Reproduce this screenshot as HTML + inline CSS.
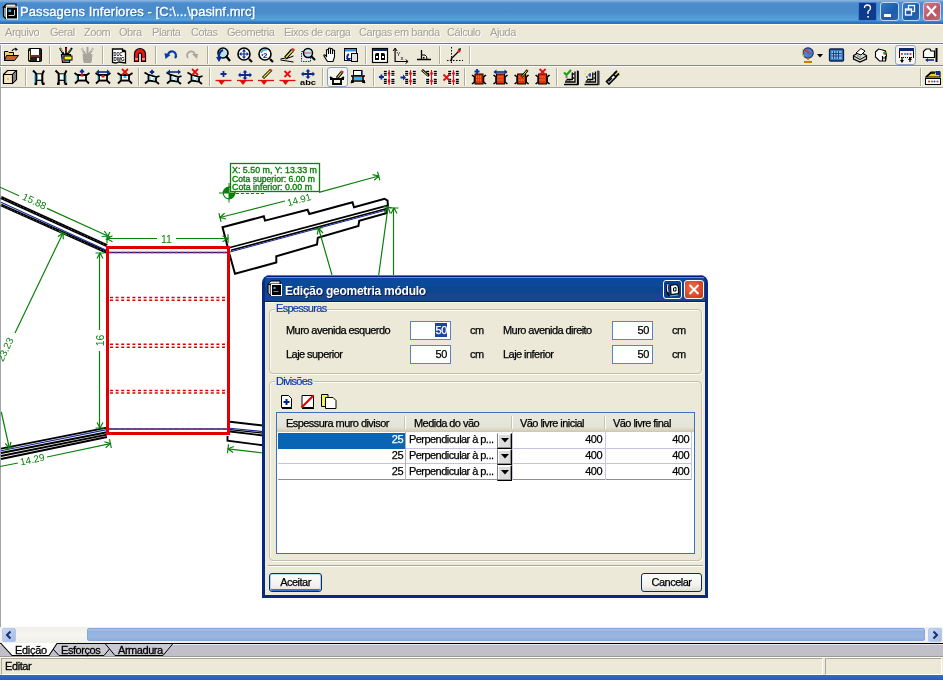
<!DOCTYPE html>
<html><head><meta charset="utf-8">
<style>
*{margin:0;padding:0;box-sizing:border-box}
html,body{width:943px;height:680px;overflow:hidden;background:#fff;font-family:"Liberation Sans",sans-serif;font-size:11px;line-height:13px}
.a{position:absolute}
body{will-change:transform}
#title{left:0;top:0;width:943px;height:24px;background:linear-gradient(#7ea6d6 0,#8db6e4 1px,#5796d4 2px,#4a8ccb 4px,#4a8bca 12px,#55a0da 19px,#5aa6dd 20px,#2f77c4 22px,#2a6fc0 24px)}
#title .t{left:20px;top:4px;color:#fff;font-size:13px;line-height:15px;letter-spacing:0.08px;-webkit-text-stroke:0.35px #fff;text-shadow:1px 1px 0 rgba(20,50,110,0.45)}
#menu{left:0;top:24px;width:943px;height:19px;background:#ece9d8;border-top:1px solid #fffbe0;border-bottom:1px solid #f8f8ff}
#menu span{position:absolute;top:1px;color:#a4a195;letter-spacing:-0.45px;text-shadow:1px 1px 0 #fff}
#tb1{left:0;top:43px;width:943px;height:23px;background:#ece9d8;border-top:1px solid #7c7a6c;border-bottom:1px solid #8c8a7a;box-shadow:inset 0 1px 0 #fff,inset 1px 0 0 #a0a4ac,inset 2px 0 0 #fff}
#tb2{left:0;top:66px;width:943px;height:22px;background:#ece9d8;border-top:1px solid #f8f8ff;border-bottom:1px solid #a4a290;box-shadow:inset 1px 0 0 #a0a4ac,inset 2px 0 0 #fff}
#draw{left:0;top:88px;width:943px;height:539px;background:#fff;border-left:1px solid #a0a4ac}
.sep{position:absolute;top:3px;width:2px;height:18px;border-left:1px solid #b0ac98;border-right:1px solid #fff}
/* dialog */
#dlg{left:262px;top:275px;width:446px;height:323px;background:#0a2a80;border-radius:8px 8px 0 0}
#dlgt{left:3px;top:0;width:440px;height:27px;border-radius:6px 6px 0 0;background:linear-gradient(#1d8fe3 0,#1d8fe3 1px,#002080 1px,#002080 2px,#20a8f0 2px,#20a8f0 3px,#0b4a98 3px,#0b4a98 12px,#0c4690 12px,#0c4690 18px,#18458f 18px,#18458f 26px,#002070 26px)}
#client{left:3px;top:27px;width:440px;height:293px;background:#ece9d8;border-top:1px solid #fffbe0}
.lbl{position:absolute;color:#000;letter-spacing:-0.55px;white-space:nowrap;-webkit-text-stroke:0.25px #000}
.grp{position:absolute;border:1px solid #c4c0aa;border-radius:4px;box-shadow:1px 1px 0 #fbfaf4,inset 1px 1px 0 #fbfaf4}
.glbl{position:absolute;color:#0b3aa8;-webkit-text-stroke:0.2px #0b3aa8;background:#ece9d8;padding:0 1px;letter-spacing:-0.7px;white-space:nowrap}
.inp{position:absolute;width:41px;height:19px;background:#fff;border:1px solid #5a82c4;text-align:right;padding:2px 3px 0 0;letter-spacing:-0.4px;-webkit-text-stroke:0.25px #000}
.btn{position:absolute;height:19px;border:1px solid #0a2a6a;border-radius:3px;background:linear-gradient(#fcfcfb,#f2f1ec 70%,#e0ddd2);text-align:center;padding-top:2px;letter-spacing:-0.5px;-webkit-text-stroke:0.25px #000}
</style></head><body>
<div id="title" class="a"><div class="t a">Passagens Inferiores - [C:\...\pasinf.mrc]</div></div>
<!--TBTN-->
<svg class="a" style="left:2px;top:3px" width="17" height="17" viewBox="0 0 17 17">
 <path d="M1.5 4 L4.5 1 L14 1 L14 4 Z" fill="#e8e8e8" stroke="#000" stroke-width="1.2"/>
 <path d="M1.5 4 L1.5 13.5 L4.5 16 L4.5 4.5 Z" fill="#aaa" stroke="#000" stroke-width="1.2"/>
 <rect x="4.5" y="4" width="11" height="12" fill="#000" stroke="#fff" stroke-width="1"/>
 <rect x="6.5" y="6.5" width="2.5" height="2.5" fill="#3ab0ff"/>
 <path d="M6.5 12.5 h6 M12.5 7 v5" stroke="#ccc" stroke-width="1"/>
</svg>
<div class="a" style="left:858px;top:2px;width:19px;height:19px;border:1px solid #3a80d8;border-radius:2px;background:#0d3a8a"></div>
<div class="a" style="left:880px;top:2px;width:19px;height:19px;border:1px solid #c0d8f8;border-radius:3px;background:linear-gradient(135deg,#3a78c8,#1d5aa8 60%,#2a66b4)"></div>
<div class="a" style="left:902px;top:2px;width:18px;height:19px;border:1px solid #c0d8f8;border-radius:3px;background:linear-gradient(135deg,#3a78c8,#1d5aa8 60%,#2a66b4)"></div>
<div class="a" style="left:923px;top:2px;width:18px;height:19px;border:1px solid #e8c8d0;border-radius:3px;background:linear-gradient(135deg,#d07888,#b85868 60%,#c06878)"></div>
<svg class="a" style="left:853px;top:0" width="90" height="24" viewBox="853 0 90 24">
 <path d="M864.5 8 Q864.5 5 867.5 5 Q870.5 5 870.5 8 Q870.5 10 868 11.5 L868 14" fill="none" stroke="#fff" stroke-width="1.3"/>
 <rect x="867.3" y="16" width="1.6" height="1.6" fill="#fff"/>
 <rect x="884" y="14" width="7" height="3" fill="#fff"/>
 <rect x="908.5" y="5.5" width="6" height="6" fill="none" stroke="#fff" stroke-width="1.3"/>
 <rect x="905.5" y="9" width="6" height="6" fill="#1d5aa8" stroke="#fff" stroke-width="1.3"/>
 <path d="M905.5 10 h6" stroke="#fff" stroke-width="1.3"/>
 <path d="M927 6 L936 16 M936 6 L927 16" stroke="#fff" stroke-width="2"/>
</svg>
<!--/TBTN-->
<div id="menu" class="a">
<span style="left:5px">Arquivo</span><span style="left:50px">Geral</span><span style="left:84px">Zoom</span><span style="left:119px">Obra</span><span style="left:152px">Planta</span><span style="left:191px">Cotas</span><span style="left:227px">Geometria</span><span style="left:284px">Eixos de carga</span><span style="left:359px">Cargas em banda</span><span style="left:447px">Cálculo</span><span style="left:490px">Ajuda</span>
</div>
<div id="tb1" class="a"></div>
<div id="tb2" class="a"></div>
<!--TB--><div class="a" style="left:895px;top:45px;width:21px;height:20px;border:1px solid #8ca4c8;border-radius:3px;background:#f6f4ec"></div><div class="a" style="left:327px;top:67px;width:21px;height:20px;border:1px solid #8ca4c8;border-radius:3px;background:#f6f4ec"></div><div class="sep" style="left:49px;top:46px"></div><div class="sep" style="left:102px;top:46px"></div><div class="sep" style="left:155px;top:46px"></div><div class="sep" style="left:207px;top:46px"></div><div class="sep" style="left:365px;top:46px"></div><div class="sep" style="left:439px;top:46px"></div><div class="sep" style="left:25px;top:68px"></div><div class="sep" style="left:138px;top:68px"></div><div class="sep" style="left:209px;top:68px"></div><div class="sep" style="left:322px;top:68px"></div><div class="sep" style="left:373px;top:68px"></div><div class="sep" style="left:464px;top:68px"></div><div class="sep" style="left:556px;top:68px"></div><div class="sep" style="left:920px;top:68px"></div><div class="sep" style="left:469px;top:46px"></div><svg class="a" style="left:817px;top:54px" width="6" height="4"><path d="M0 0 L6 0 L3 3.5 Z" fill="#000"/></svg><svg class="a" style="left:0;top:0" width="943" height="88" viewBox="0 0 943 88"><g stroke-linecap="butt"><g transform="translate(3 47)"><path d="M1.5 4.5 L5 4.5 L6 5.5 L10.5 5.5 L10.5 13.5 L1.5 13.5 Z" fill="#f0d860" stroke="#000"/><path d="M3.5 8.5 L15.5 8.5 L11.5 13.5 L1.5 13.5 Z" fill="#c8642a" stroke="#000"/><path d="M9 4 Q10.5 1 13.5 2" fill="none" stroke="#000" stroke-width="1.2"/><path d="M12 0.5 L15 2.5 L12.5 4 Z" fill="#000"/></g><g transform="translate(27 47)"><rect x="1.5" y="1.5" width="13" height="13" rx="1" fill="#202020" stroke="#000"/><rect x="4" y="2" width="8" height="6" fill="#fff"/><path d="M3 9 L13 9" stroke="#e04020" stroke-width="1"/><path d="M2.5 4 L2.5 13" stroke="#f0e020" stroke-width="1"/><rect x="10" y="11" width="2" height="3" fill="#fff"/></g><g transform="translate(58 47)"><path d="M2 1 L6 8 M14 1 L9 8 M8 0 L8 7" stroke="#000" stroke-width="2"/><path d="M2.5 1.5 L5 5" stroke="#f0f0a0" stroke-width="1"/><path d="M13 2 L10 6" stroke="#30a030" stroke-width="1"/><path d="M8 1 L8 6" stroke="#e02020" stroke-width="1"/><path d="M3.5 7.5 L12.5 7.5 L11.5 15.5 L4.5 15.5 Z" fill="#30a0e0" stroke="#000" stroke-width="1.2"/><rect x="6" y="9" width="8" height="4" fill="#f8f020" stroke="#000"/><path d="M4.5 12 L7 15" stroke="#e03030" stroke-width="1.5"/></g><g transform="translate(79.5 47)"><path d="M2 1 L6 8 M14 1 L9 8 M8 0 L8 7" stroke="#a8a69c" stroke-width="2"/><path d="M3.5 7.5 L12.5 7.5 L11.5 15.5 L4.5 15.5 Z" fill="#a8a69c" stroke="#a8a69c"/><path d="M1 0 L4 4 M15 0 L12 4" stroke="#fff" stroke-width="1" opacity="0.6"/></g><g transform="translate(111 47)"><path d="M1.5 2 L11.5 2 L11.5 4.5 L14.5 4.5 L14.5 16 L8 15 L5 16 L1.5 15.5 Z" fill="#fff" stroke="#000" stroke-width="1.3"/><path d="M11.5 3.5 Q13 3 14.5 4.5" fill="none" stroke="#000" stroke-width="1.5"/><text x="2.5" y="8.6" font-size="5" font-weight="bold" font-family="Liberation Sans" fill="#000" textLength="9" lengthAdjust="spacingAndGlyphs">DOC</text><text x="2.5" y="13.6" font-size="5" font-weight="bold" font-family="Liberation Sans" fill="#000" textLength="11" lengthAdjust="spacingAndGlyphs">DWG</text></g><g transform="translate(132 47)"><path d="M2.5 14.5 L2.5 7 A5.5 5.5 0 0 1 13.5 7 L13.5 14.5 L9.5 14.5 L9.5 7.5 A1.5 1.5 0 0 0 6.5 7.5 L6.5 14.5 Z" fill="#e01818" stroke="#000" stroke-width="1.2"/><path d="M3 12 h3 M10 12 h3" stroke="#fff" stroke-width="1.2"/></g><g transform="translate(163 47)"><path d="M12 11 A4 4 0 1 0 5 9" fill="none" stroke="#0a3aa8" stroke-width="2.2"/><path d="M1.5 6 L7.5 8 L2.5 12 Z" fill="#0a3aa8"/></g><g transform="translate(184 47)"><path d="M4 11 A4 4 0 1 1 11 9" fill="none" stroke="#a8a69c" stroke-width="1.8"/><path d="M8 7 L14 7 L13 12 Z" fill="#a8a69c"/></g><g transform="translate(215 47)"><circle cx="8" cy="6" r="5" fill="#b8e0f0" stroke="#000" stroke-width="1.6"/><path d="M11 9 L15 14" stroke="#000" stroke-width="2.2"/><path d="M8 3 Q3 5 4 12" fill="none" stroke="#0a2a90" stroke-width="2.2"/><path d="M1 10 L4 15 L7 10 Z" fill="#0a2a90"/></g><g transform="translate(237 47)"><circle cx="7" cy="7" r="6" fill="#fff" stroke="#000" stroke-width="1.6"/><path d="M12 12 L15 15" stroke="#000" stroke-width="2.2"/><path d="M7 3 L7 11 M3 7 L11 7" stroke="#0a2a90" stroke-width="1.2"/><path d="M7 2 L5 4.5 L9 4.5 Z M7 12 L5 9.5 L9 9.5 Z M2 7 L4.5 5 L4.5 9 Z M12 7 L9.5 5 L9.5 9 Z" fill="#0a2a90"/></g><g transform="translate(258 47)"><circle cx="7" cy="7" r="6" fill="#fff" stroke="#000" stroke-width="1.6"/><path d="M12 12 L15 15" stroke="#000" stroke-width="2.2"/><path d="M3 6 Q5 2 9 3" fill="none" stroke="#40b0e0" stroke-width="1.5"/><text x="5" y="10.5" font-size="8" font-family="Liberation Sans" font-weight="bold" fill="#0a2a90">2</text><path d="M3 8 l2 -1 l0 2 z" fill="#0a2a90"/></g><g transform="translate(279.5 47)"><path d="M6 11 L13 3" stroke="#000" stroke-width="3.5"/><path d="M6.5 10.5 L13 3.5" stroke="#f0e040" stroke-width="1.5"/><path d="M12.5 1.5 L15 3.5" stroke="#e03020" stroke-width="2"/><path d="M1 12 L6 11 M1 13 L14 15 M6 12 L14 9" stroke="#000" stroke-width="1"/></g><g transform="translate(300 47)"><rect x="1.5" y="4.5" width="9" height="10" fill="none" stroke="#1030a0" stroke-dasharray="1.5 1"/><circle cx="8" cy="6" r="4.5" fill="#c0e8f0" stroke="#000" stroke-width="1.5"/><path d="M4 6 h7" stroke="#e04060" stroke-width="1"/><path d="M11 9 L15 13" stroke="#000" stroke-width="2.2"/></g><g transform="translate(322 47)"><path d="M5.5 14.5 L2 9 Q1.5 7.5 3 8 L4.5 9.5 L4.5 3 Q5.5 2 6.5 3 L6.5 7 L6.5 1.5 Q7.5 0.5 8.5 1.5 L8.5 7 L8.5 2 Q9.5 1 10.5 2 L10.5 7 L10.5 3.5 Q11.5 2.5 12.5 3.5 L12.5 10 L11 14.5 Z" fill="#fff" stroke="#000" stroke-width="1.1"/></g><g transform="translate(343 47)"><rect x="1.5" y="1.5" width="12" height="12" fill="#fff" stroke="#000"/><rect x="2" y="2" width="11" height="2.5" fill="#3a8ad0"/><rect x="8.5" y="6.5" width="6" height="8" fill="#e0e0e0" stroke="#000"/><path d="M6 7 Q3 9 5 13" fill="none" stroke="#0a2a90" stroke-width="1.8"/><path d="M3 11 L6 14.5 L8 11 Z" fill="#0a2a90"/></g><g transform="translate(372 47)"><rect x="0.5" y="1.5" width="15" height="14" fill="#fff" stroke="#000" stroke-width="1.2"/><rect x="1" y="2" width="14" height="2" fill="#0a2a70"/><path d="M3 13 L3 8 Q3 6 5 6 L7 6 L7 13 Z M9 13 L9 6 L11 6 Q13 6 13 8 L13 13 Z" fill="#000"/><rect x="4" y="9" width="2" height="2" fill="#fff"/><rect x="10" y="9" width="2" height="2" fill="#fff"/></g><g transform="translate(392.6 47)"><path d="M2.5 2 L2.5 14.5 L15 14.5" fill="none" stroke="#000" stroke-width="1.2"/><path d="M0.5 4 L2.5 1 L4.5 4 M13 12.5 L15.5 14.5 L13 16.5" fill="none" stroke="#000"/><text x="4" y="9" font-size="6" font-family="Liberation Sans" fill="#000">Y</text><text x="8" y="13" font-size="6" font-family="Liberation Sans" fill="#000">x</text></g><g transform="translate(416 47)"><path d="M5.5 3 L5.5 12.5 M1 12.5 L15 12.5" stroke="#000" stroke-width="1.3"/><path d="M5.5 8 L9 8 Q11 9 11 12" fill="none" stroke="#000"/><rect x="7" y="10" width="1.5" height="1.5" fill="#000"/></g><g transform="translate(447 47)"><path d="M4.5 0 L4.5 16 M0 13.5 L16 13.5" stroke="#000" stroke-dasharray="1.5 1.5"/><path d="M4 12 L13 3" stroke="#000" stroke-width="1.2"/><path d="M11 2 L14 1 L13 5 Z M2.5 13 L5.5 12 L4.5 15 Z" fill="#000"/><circle cx="12" cy="4" r="1.5" fill="#e02020"/></g><g transform="translate(801 47)"><circle cx="7" cy="6" r="5.2" fill="#4080e0" stroke="#203060" stroke-width="1.2"/><path d="M4 4 Q6 3 7 5 Q8 8 10 6" stroke="#e03030" stroke-width="1.5" fill="none"/><path d="M4 8 L6 9" stroke="#30c030" stroke-width="1.5"/><path d="M7 11 L7 13 M3 15 L11 15" stroke="#c08000" stroke-width="2"/><path d="M2 2 Q0 6 3 10" fill="none" stroke="#f0c040" stroke-width="1"/></g><g transform="translate(828.5 47)"><rect x="1" y="2" width="14" height="12" rx="1" fill="#2e7cc0" stroke="#102050" stroke-width="1.3"/><rect x="3" y="4" width="10" height="8" fill="#86c0e8"/><path d="M5 4 v8 M7.5 4 v8 M10 4 v8 M3 6.5 h10 M3 9 h10" stroke="#1a3a7a" stroke-width="0.9"/></g><g transform="translate(852 47)"><path d="M1.5 8.5 L8 5 L14.5 8.5 L14.5 12 L8 15 L1.5 12 Z" fill="#d8d8d8" stroke="#000" stroke-width="1.2"/><path d="M4 6 L9 1.5 L13 4 L9 8 Z" fill="#fff" stroke="#000"/><path d="M1.5 9 L8 12.5 L14.5 9" fill="none" stroke="#000"/><circle cx="6" cy="9" r="0.8" fill="#e02020"/><circle cx="8" cy="10" r="0.8" fill="#20a020"/></g><g transform="translate(873.5 47)"><path d="M2 5 L5 2 L9 3 L12 4 L13 8 L12 14 L6 14 L2 10 Z" fill="#fff" stroke="#000" stroke-width="1.1"/><path d="M9 9 L9 14 M12 9 L12 14 M9 11 L12 11" stroke="#000" stroke-width="1.2"/><circle cx="11" cy="6" r="1.5" fill="#20a020"/><circle cx="12" cy="7" r="1" fill="#e02020"/></g><g transform="translate(898 47)"><rect x="1" y="1" width="15" height="3" fill="#0a2a70"/><path d="M1.5 4 v6" stroke="#000"/><path d="M15.5 4 v6" stroke="#000"/><circle cx="4" cy="7" r="1" fill="#e02020"/><circle cx="7" cy="7" r="1" fill="#20a020"/><circle cx="9.5" cy="7" r="1" fill="#2040e0"/><circle cx="12.5" cy="7" r="1" fill="#e02020"/><path d="M4 10 v5 M12 10 v5" stroke="#000" stroke-width="1.3"/><path d="M2 13 L4 16 L6 13 Z M10 13 L12 10 L14 13 Z" fill="#000"/><path d="M1 10.5 h15" stroke="#000" stroke-dasharray="1 1"/></g><g transform="translate(922 47)"><path d="M1.5 4.5 L4 2 L8 2 L9 4 L12.5 4 L12.5 10.5 L1.5 10.5 Z" fill="#fff" stroke="#000" stroke-width="1.2"/><path d="M14.5 1 L14.5 15" stroke="#000" stroke-width="2"/><path d="M5 13 L12 13" stroke="#0a2a90" stroke-width="1.6"/><path d="M3 13 L6 11 L6 15 Z" fill="#0a2a90"/></g><g transform="translate(2 69)"><path d="M1.5 5.5 L5.5 1.5 L14.5 1.5 L14.5 10.5 L10.5 14.5 L1.5 14.5 Z" fill="#f8e8c0" stroke="#000" stroke-width="1.2"/><path d="M1.5 5.5 L10.5 5.5 L14.5 1.5 M10.5 5.5 L10.5 14.5" fill="none" stroke="#000" stroke-width="1.2"/><path d="M11 6 L14 3 L14 10 L11 13 Z" fill="#808080"/><circle cx="6" cy="10" r="0.7" fill="#e06060"/></g><g transform="translate(30.5 69)"><rect x="6.5" y="5.5" width="4.5" height="5" fill="#fff"/><path d="M2.5 1.5 L6 5 M13.5 1.5 L11.8 5" stroke="#000" stroke-width="2"/><path d="M5.7 5 L5.7 14.4 M11.8 5 L11.8 14.4" stroke="#000" stroke-width="2"/><path d="M5.7 4.8 h6.1" stroke="#000" stroke-width="1"/><path d="M5.7 11.3 h6.1" stroke="#000" stroke-width="1.2"/><rect x="4" y="13.5" width="2.6" height="2.5" fill="#000"/><rect x="11.5" y="13.5" width="2.6" height="2.5" fill="#000"/><path d="M4.3 6 L4.3 14 M1.8 2.5 L4.5 5.2" stroke="#20c8f8" stroke-width="0.9"/><path d="M7 6 v4" stroke="#20c8f8" stroke-width="1"/></g><g transform="translate(53 69)"><rect x="6.5" y="5.5" width="4.5" height="5" fill="#fff"/><path d="M2.5 1.5 L6 5 M13.5 1.5 L11.8 5" stroke="#000" stroke-width="2"/><path d="M5.7 5 L5.7 14.4 M11.8 5 L11.8 14.4" stroke="#000" stroke-width="2"/><path d="M5.7 4.8 h6.1" stroke="#000" stroke-width="1"/><path d="M5.7 11.3 h6.1" stroke="#000" stroke-width="1.2"/><rect x="4" y="13.5" width="2.6" height="2.5" fill="#000"/><rect x="11.5" y="13.5" width="2.6" height="2.5" fill="#000"/><path d="M13.2 6 L13.2 14" stroke="#20c8f8" stroke-width="0.9"/><path d="M10.5 6 v4" stroke="#20c8f8" stroke-width="1"/></g><g transform="translate(74 69)"><rect x="4.5" y="6" width="7" height="5" fill="#fff"/><path d="M0.5 4 L3.5 6 L12.5 6 L15.5 4 M4 6 L4 11.5 M12 6 L12 11.5 M1 14.5 L4 11.5 L12 11.5 L15 14.5" fill="none" stroke="#000" stroke-width="1.8"/><path d="M5 10.5 h6" stroke="#20c8f8" stroke-width="0.9"/><path d="M3 7 v4" stroke="#20c8f8" stroke-width="0.8"/><path d="M8 0.2999999999999998 v4.4 M5.8 2.5 h4.4" stroke="#0a2a90" stroke-width="1.8"/><rect x="6.5" y="5" width="3" height="2.5" fill="#e01010"/></g><g transform="translate(95 69)"><rect x="4.5" y="6" width="7" height="5" fill="#fff"/><path d="M0.5 4 L3.5 6 L12.5 6 L15.5 4 M4 6 L4 11.5 M12 6 L12 11.5 M1 14.5 L4 11.5 L12 11.5 L15 14.5" fill="none" stroke="#000" stroke-width="1.8"/><path d="M5 10.5 h6" stroke="#20c8f8" stroke-width="0.9"/><path d="M3 7 v4" stroke="#20c8f8" stroke-width="0.8"/><path d="M2 3 h12" stroke="#0a2a90" stroke-width="1.6"/><path d="M1 3 L4 0.5 L4 5.5 Z M15 3 L12 0.5 L12 5.5 Z" fill="#0a2a90"/><rect x="6.5" y="6" width="3" height="2.5" fill="#e01010"/></g><g transform="translate(117 69)"><rect x="4.5" y="6" width="7" height="5" fill="#fff"/><path d="M0.5 4 L3.5 6 L12.5 6 L15.5 4 M4 6 L4 11.5 M12 6 L12 11.5 M1 14.5 L4 11.5 L12 11.5 L15 14.5" fill="none" stroke="#000" stroke-width="1.8"/><path d="M5 10.5 h6" stroke="#20c8f8" stroke-width="0.9"/><path d="M3 7 v4" stroke="#20c8f8" stroke-width="0.8"/><path d="M5 0 L11 6 M11 0 L5 6" stroke="#e01010" stroke-width="1.8"/><rect x="6.5" y="7" width="3" height="2" fill="#20c8f8"/></g><g transform="translate(144 69)"><path d="M5 6 L12 8 L12 12 L5 11 Z" fill="#fff"/><path d="M0.5 3.5 L4 5.5 L12.5 8 L15.5 7 M4.5 5.5 L4.5 11.5 M12 8 L12 12.5 M1 14.5 L4.5 11.5 L12 12.5 L15 15" fill="none" stroke="#000" stroke-width="1.8"/><path d="M6 8 v3 M10 9 v3" stroke="#20c8f8" stroke-width="1"/><path d="M8 0.7999999999999998 v4.4 M5.8 3 h4.4" stroke="#0a2a90" stroke-width="1.8"/></g><g transform="translate(166 69)"><path d="M5 6 L12 8 L12 12 L5 11 Z" fill="#fff"/><path d="M0.5 3.5 L4 5.5 L12.5 8 L15.5 7 M4.5 5.5 L4.5 11.5 M12 8 L12 12.5 M1 14.5 L4.5 11.5 L12 12.5 L15 15" fill="none" stroke="#000" stroke-width="1.8"/><path d="M6 8 v3 M10 9 v3" stroke="#20c8f8" stroke-width="1"/><path d="M2 3 h12" stroke="#0a2a90" stroke-width="1.6"/><path d="M1 3 L4 0.5 L4 5.5 Z M15 3 L12 0.5 L12 5.5 Z" fill="#0a2a90"/></g><g transform="translate(187 69)"><path d="M5 6 L12 8 L12 12 L5 11 Z" fill="#fff"/><path d="M0.5 3.5 L4 5.5 L12.5 8 L15.5 7 M4.5 5.5 L4.5 11.5 M12 8 L12 12.5 M1 14.5 L4.5 11.5 L12 12.5 L15 15" fill="none" stroke="#000" stroke-width="1.8"/><path d="M6 8 v3 M10 9 v3" stroke="#20c8f8" stroke-width="1"/><path d="M5 0 L11 6 M11 0 L5 6" stroke="#e01010" stroke-width="1.8"/></g><g transform="translate(215.5 69)"><path d="M0 11.5 L16 11.5" stroke="#e01010" stroke-width="1.3"/><path d="M2 11 L10 11 L6 16 Z" fill="#e01010"/><path d="M8 2 v6 M5 5 h6" stroke="#0a2a90" stroke-width="1.8"/></g><g transform="translate(237 69)"><path d="M0 11.5 L16 11.5" stroke="#e01010" stroke-width="1.3"/><path d="M2 11 L10 11 L6 16 Z" fill="#e01010"/><path d="M8 2 v8 M3 6 h10" stroke="#0a2a90" stroke-width="1.8"/><path d="M8 1 L5.5 3.5 L10.5 3.5 Z M8 11 L5.5 8.5 L10.5 8.5 Z M1 6 L3.5 3.5 L3.5 8.5 Z M15 6 L12.5 3.5 L12.5 8.5 Z" fill="#0a2a90"/></g><g transform="translate(258 69)"><path d="M0 11.5 L16 11.5" stroke="#e01010" stroke-width="1.3"/><path d="M2 11 L10 11 L6 16 Z" fill="#e01010"/><path d="M5 9 L13 1" stroke="#000" stroke-width="3"/><path d="M5.5 8.5 L12.5 1.5" stroke="#f0e040" stroke-width="1.2"/><path d="M12 0.5 L14 2" stroke="#e03020" stroke-width="2"/></g><g transform="translate(279.5 69)"><path d="M0 11.5 L16 11.5" stroke="#e01010" stroke-width="1.3"/><path d="M2 11 L10 11 L6 16 Z" fill="#e01010"/><path d="M5 2 L11 8 M11 2 L5 8" stroke="#e01010" stroke-width="1.8"/></g><g transform="translate(300 69)"><path d="M8 1 v8 M3 5 h10" stroke="#0a2a90" stroke-width="1.8"/><path d="M8 0 L5.5 2.5 L10.5 2.5 Z M8 10 L5.5 7.5 L10.5 7.5 Z M1 5 L3.5 2.5 L3.5 7.5 Z M15 5 L12.5 2.5 L12.5 7.5 Z" fill="#0a2a90"/><text x="0" y="16" font-size="6.5" font-weight="bold" font-family="Liberation Sans" fill="#000" textLength="16" lengthAdjust="spacingAndGlyphs">abc</text></g><g transform="translate(329 69)"><path d="M1 8 L4 10 L4 15 M15 8 L12 10 L12 15 M1 10 h14 M3 15 h10" fill="none" stroke="#000" stroke-width="1.8"/><path d="M8 9 L13 3" stroke="#000" stroke-width="3"/><path d="M8.5 8.5 L12.5 3.5" stroke="#f0e040" stroke-width="1.2"/><path d="M12 2 L14.5 3.5" stroke="#e03020" stroke-width="2"/></g><g transform="translate(350 69)"><rect x="3.5" y="1.5" width="8" height="5" fill="#fff" stroke="#000"/><path d="M12 1 L12 6" stroke="#0a2a90" stroke-width="1.4"/><path d="M1 7 h14 M1 12 h14 M3 7 v7 M13 7 v7 M1 14 L3 12 M15 14 L13 12" fill="none" stroke="#000" stroke-width="1.6"/><rect x="4" y="8" width="8" height="3" fill="#20c0f0"/></g><g transform="translate(378.6 69)"><rect x="4.5" y="0.5" width="11.5" height="15.5" fill="#fff" opacity="0.85"/><path d="M5.2 2.3 h3 M12.8 2.3 h3" stroke="#000" stroke-width="1.3"/><path d="M5.2 4.3 h3 M12.8 4.3 h3" stroke="#000" stroke-width="1.3"/><path d="M5.2 6.2 h3 M12.8 6.2 h3" stroke="#000" stroke-width="1.3"/><path d="M5.2 10.5 h3 M12.8 10.5 h3" stroke="#000" stroke-width="1.3"/><path d="M5.2 12.5 h3 M12.8 12.5 h3" stroke="#000" stroke-width="1.3"/><path d="M5.2 14.4 h3 M12.8 14.4 h3" stroke="#000" stroke-width="1.3"/><path d="M10.5 1 v15" stroke="#e01010" stroke-width="1.3"/><path d="M10.5 2 L9 4.5 L10.5 7 L12 4.5 Z M10.5 9.5 L9 12 L10.5 14.5 L12 12 Z" fill="#e01010"/><path d="M2.8 5.5 v5.0 M0.2999999999999998 8 h5.0" stroke="#0a2a90" stroke-width="1.8"/></g><g transform="translate(400 69)"><rect x="4.5" y="0.5" width="11.5" height="15.5" fill="#fff" opacity="0.85"/><path d="M5.2 2.3 h3 M12.8 2.3 h3" stroke="#000" stroke-width="1.3"/><path d="M5.2 4.3 h3 M12.8 4.3 h3" stroke="#000" stroke-width="1.3"/><path d="M5.2 6.2 h3 M12.8 6.2 h3" stroke="#000" stroke-width="1.3"/><path d="M5.2 10.5 h3 M12.8 10.5 h3" stroke="#000" stroke-width="1.3"/><path d="M5.2 12.5 h3 M12.8 12.5 h3" stroke="#000" stroke-width="1.3"/><path d="M5.2 14.4 h3 M12.8 14.4 h3" stroke="#000" stroke-width="1.3"/><path d="M10.5 1 v15" stroke="#e01010" stroke-width="1.3"/><path d="M10.5 2 L9 4.5 L10.5 7 L12 4.5 Z M10.5 9.5 L9 12 L10.5 14.5 L12 12 Z" fill="#e01010"/><path d="M0.5 8.5 h3" stroke="#0a2a90" stroke-width="2"/><path d="M6 8.5 L3 5.5 L3 11.5 Z" fill="#0a2a90"/></g><g transform="translate(421 69)"><rect x="4.5" y="0.5" width="11.5" height="15.5" fill="#fff" opacity="0.85"/><path d="M5.2 2.3 h3 M12.8 2.3 h3" stroke="#000" stroke-width="1.3"/><path d="M5.2 4.3 h3 M12.8 4.3 h3" stroke="#000" stroke-width="1.3"/><path d="M5.2 6.2 h3 M12.8 6.2 h3" stroke="#000" stroke-width="1.3"/><path d="M5.2 10.5 h3 M12.8 10.5 h3" stroke="#000" stroke-width="1.3"/><path d="M5.2 12.5 h3 M12.8 12.5 h3" stroke="#000" stroke-width="1.3"/><path d="M5.2 14.4 h3 M12.8 14.4 h3" stroke="#000" stroke-width="1.3"/><path d="M10.5 1 v15" stroke="#e01010" stroke-width="1.3"/><path d="M10.5 2 L9 4.5 L10.5 7 L12 4.5 Z M10.5 9.5 L9 12 L10.5 14.5 L12 12 Z" fill="#e01010"/><path d="M1 1 L8 7" stroke="#000" stroke-width="2.5"/><path d="M1.5 1.5 L7 6.5" stroke="#f0e040" stroke-width="1"/></g><g transform="translate(443 69)"><rect x="4.5" y="0.5" width="11.5" height="15.5" fill="#fff" opacity="0.85"/><path d="M5.2 2.3 h3 M12.8 2.3 h3" stroke="#000" stroke-width="1.3"/><path d="M5.2 4.3 h3 M12.8 4.3 h3" stroke="#000" stroke-width="1.3"/><path d="M5.2 6.2 h3 M12.8 6.2 h3" stroke="#000" stroke-width="1.3"/><path d="M5.2 10.5 h3 M12.8 10.5 h3" stroke="#000" stroke-width="1.3"/><path d="M5.2 12.5 h3 M12.8 12.5 h3" stroke="#000" stroke-width="1.3"/><path d="M5.2 14.4 h3 M12.8 14.4 h3" stroke="#000" stroke-width="1.3"/><path d="M10.5 1 v15" stroke="#e01010" stroke-width="1.3"/><path d="M10.5 2 L9 4.5 L10.5 7 L12 4.5 Z M10.5 9.5 L9 12 L10.5 14.5 L12 12 Z" fill="#e01010"/><path d="M0.5 5.5 L6.5 11.5 M6.5 5.5 L0.5 11.5" stroke="#e01010" stroke-width="1.8"/></g><g transform="translate(471 69)"><path d="M1 6 L3.5 8 L3.5 13 L1 15 M15 6 L12.5 8 L12.5 13 L15 15" fill="none" stroke="#000" stroke-width="1.6"/><rect x="4" y="5" width="8" height="10" fill="#e03010" stroke="#000" stroke-width="1"/><path d="M5 8 h6 M5 11 h6" stroke="#f0c020" stroke-width="1" stroke-dasharray="1 1"/><path d="M6 0.0 v5.0 M3.5 2.5 h5.0" stroke="#0a2a90" stroke-width="1.8"/></g><g transform="translate(492.5 69)"><path d="M1 6 L3.5 8 L3.5 13 L1 15 M15 6 L12.5 8 L12.5 13 L15 15" fill="none" stroke="#000" stroke-width="1.6"/><rect x="4" y="5" width="8" height="10" fill="#e03010" stroke="#000" stroke-width="1"/><path d="M5 8 h6 M5 11 h6" stroke="#f0c020" stroke-width="1" stroke-dasharray="1 1"/><path d="M2 3 h12" stroke="#0a2a90" stroke-width="1.6"/><path d="M1 3 L4 0.5 L4 5.5 Z M15 3 L12 0.5 L12 5.5 Z" fill="#0a2a90"/></g><g transform="translate(513.6 69)"><path d="M1 6 L3.5 8 L3.5 13 L1 15 M15 6 L12.5 8 L12.5 13 L15 15" fill="none" stroke="#000" stroke-width="1.6"/><rect x="4" y="5" width="8" height="10" fill="#e03010" stroke="#000" stroke-width="1"/><path d="M5 8 h6 M5 11 h6" stroke="#f0c020" stroke-width="1" stroke-dasharray="1 1"/><path d="M8 8 L14 1" stroke="#000" stroke-width="2.5"/><path d="M8.5 7.5 L13.5 1.5" stroke="#f0e040" stroke-width="1"/></g><g transform="translate(534.6 69)"><path d="M1 6 L3.5 8 L3.5 13 L1 15 M15 6 L12.5 8 L12.5 13 L15 15" fill="none" stroke="#000" stroke-width="1.6"/><rect x="4" y="5" width="8" height="10" fill="#e03010" stroke="#000" stroke-width="1"/><path d="M5 8 h6 M5 11 h6" stroke="#f0c020" stroke-width="1" stroke-dasharray="1 1"/><path d="M5 0 L11 6 M11 0 L5 6" stroke="#e01010" stroke-width="1.8"/></g><g transform="translate(563.5 69)"><path d="M0.5 15.5 L14 15.5 L14 1.5 M1.5 13 L11.5 13 L11.5 2.5 M3 10.5 L8.8 10.5 L8.8 3.5" fill="none" stroke="#000" stroke-width="1.3"/><path d="M15 2 v14" stroke="#202040" stroke-width="1"/><path d="M2 8 h2 M2 11.8 h2 M5 12 h2 M10.2 4 v2 M10.2 8 v2" stroke="#000" stroke-width="0.9"/><path d="M0.5 3.5 L3 6 L7.5 1" fill="none" stroke="#18a018" stroke-width="2.2"/></g><g transform="translate(584 69)"><path d="M0.5 15.5 L14 15.5 L14 1.5 M1.5 13 L11.5 13 L11.5 2.5 M3 10.5 L8.8 10.5 L8.8 3.5" fill="none" stroke="#000" stroke-width="1.3"/><path d="M15 2 v14" stroke="#202040" stroke-width="1"/><path d="M2 8 h2 M2 11.8 h2 M5 12 h2 M10.2 4 v2 M10.2 8 v2" stroke="#000" stroke-width="0.9"/><path d="M1 2 h2 M5 1 h2 M1 4 v2" stroke="#e8e840" stroke-width="1.2"/><path d="M6 4 v4 M4 6 h3" stroke="#0a2a90" stroke-width="1.2"/></g><g transform="translate(605 69)"><path d="M1.5 12.5 L4 15 L11 8 L8.5 5.5 Z" fill="#fff" stroke="#000" stroke-width="1.6"/><path d="M9 5 L12 2 M11 7.5 L14 4.5" stroke="#000" stroke-width="1.8"/><path d="M3.5 12.5 L7 9" stroke="#000" stroke-width="1.2"/><path d="M11 0.5 h2 M14.5 2 v2 M15 6 v1.5" stroke="#f0f040" stroke-width="1.2"/></g><g transform="translate(925 69)"><path d="M1 8 L6 3 L15 3 L15 8 Z" fill="#f0d020" stroke="#000" stroke-width="1.1"/><path d="M1 8 L6 4 L10 4" fill="none" stroke="#000" stroke-width="1.6"/><rect x="11" y="2" width="4" height="4" fill="#0a2a90"/><rect x="0.5" y="9.5" width="15" height="6" fill="#fff" stroke="#000"/><circle cx="4" cy="12.5" r="1" fill="#e02020"/><circle cx="7" cy="12.5" r="1" fill="#20a020"/><circle cx="9.5" cy="12.5" r="1" fill="#2040e0"/><circle cx="12.5" cy="12.5" r="1" fill="#e02020"/></g></g></svg><!--/TB-->
<div id="draw" class="a"></div>




<svg class="a" style="left:0;top:0" width="943" height="627" viewBox="0 0 943 627">
<g fill="none" stroke-linecap="butt">
 <!-- top-left wall -->
 <path d="M1 197.5 L107 245.6" stroke="#000" stroke-width="3.2"/>
 <path d="M1 205 L107 252.3" stroke="#000" stroke-width="3"/>
 <path d="M1 197.5 L107 245.6 M1 205.2 L107 252.5" stroke="#fff" stroke-width="0.6" stroke-dasharray="1 2.5" opacity="0.7"/>
 <path d="M1 202.3 L107 250.6" stroke="#1a2a9a" stroke-width="1.1"/>
 <!-- bottom-left wall -->
 <path d="M1 448.6 L107 427.6 M1 453 L107 432.2 M1 456 L107 434.6 M1 459 L107 437" stroke="#000" stroke-width="1.9"/>
 <path d="M1 450.8 L107 429.6" stroke="#1a2a9a" stroke-width="1.1"/>
 <!-- top-right wall -->
 <path d="M227.5 246.3 L222.5 227.3 L263.8 216.3 L265 220.6 L307.6 209.8 L309.3 214 L352.5 202.2 L354 207.3 L384.6 198.8 L387.5 200.5 L388 206.5" stroke="#000" stroke-width="2"/>
 <path d="M230 247.5 L388 205.4 M231 250.2 L388 208.3" stroke="#000" stroke-width="1.7"/>
 <path d="M230 252 L388 209.6" stroke="#1a2a9a" stroke-width="1"/>
 <path d="M229.4 253.8 L235 273.8 L276.3 262.5 L276.3 256.3 L317 244.5 L317.8 237.8 L358.4 226 L359.2 220.8 L386.3 213.2 L388 206.5" stroke="#000" stroke-width="2"/>
 <!-- bottom-right wall -->
 <path d="M230 421.8 L263 425.5 M230 431.5 L263 435.5 M227.5 436 L227.5 440.6 L263 445.3" stroke="#000" stroke-width="1.9"/>
 <path d="M230 429.6 L263 433.2" stroke="#000" stroke-width="1.2"/>
 <path d="M230 428.2 L263 431.6" stroke="#1a2a9a" stroke-width="1.1"/>
 <!-- red rect -->
 <rect x="107.5" y="247.5" width="121" height="186" stroke="#e00000" stroke-width="3"/>
 <path d="M109 252.5 L227 252.5 M109 429 L227 429" stroke="#10208a" stroke-width="1.5"/>
 <path d="M109 252.5 L227 252.5 M109 429 L227 429" stroke="#c02050" stroke-width="1.5" stroke-dasharray="2.5 3.5"/>
 <path d="M110 297.6 L227 297.6 M110 300.2 L227 300.2 M110 344.2 L227 344.2 M110 347.2 L227 347.2 M110 390.5 L227 390.5 M110 393 L227 393" stroke="#e00000" stroke-width="1.5" stroke-dasharray="3 2.6"/>
 <!-- green dims -->
 <g stroke="#0b800b" stroke-width="1.2">
  <path d="M0 187.2 L19 195.8 M47 208.4 L110 237"/>
  <path d="M63 233 L15 333"/>
  <path d="M1.3 412 L9.3 448"/>
  <path d="M0 466.5 L18 463 M47 457 L110.4 443.6"/>
  <path d="M107 238.5 L157 238.5 M176 238.5 L228 238.5"/>
  <path d="M99.5 253 L99.5 330 M99.5 351 L99.5 428"/>
  <path d="M220 217.5 L285 201 M319 192.4 L378.7 176"/>
  <path d="M318.6 228.5 L332 275 M388 207.3 L378.7 275 M393.5 208 L393.5 275"/>
  <path d="M228 448.8 L263 453"/>
  <!-- ticks -->
  <path d="M101.8 236.5 L108.0 236.0 L104.2 231.0 M106.1 240.1 L109.9 231.9 M112.5 235.8 L107.0 238.8 L112.5 241.8 M107.0 234.3 L107.0 243.3 M222.5 241.8 L228.0 238.8 L222.5 235.8 M228.0 243.3 L228.0 234.3 M103.0 258.5 L100.0 253.0 L97.0 258.5 M104.5 253.0 L95.5 253.0 M97.0 422.5 L100.0 428.0 L103.0 422.5 M95.5 428.0 L104.5 428.0 M63.3 239.3 L63.0 233.0 L57.9 236.7 M67.1 234.9 L58.9 231.1 M105.6 447.7 L110.4 443.6 L104.4 441.8 M111.3 448.0 L109.5 439.2 M224.6 213.2 L220.0 217.5 L226.1 219.0 M218.9 213.1 L221.1 221.9 M374.2 180.3 L378.7 176.0 L372.6 174.6 M379.9 180.3 L377.5 171.7 M323.0 233.0 L318.6 228.5 L317.2 234.6 M322.9 227.3 L314.3 229.7 M397.0 213.5 L394.0 208.0 L391.0 213.5 M398.5 208.0 L389.5 208.0 M390.2 213.2 L388.0 207.3 L384.3 212.3 M392.5 207.9 L383.5 206.7 M5.2 443.3 L9.3 448.0 L11.0 442.0 M4.9 449.0 L13.7 447.0 M233.8 446.5 L228.0 448.8 L233.1 452.4 M228.5 444.3 L227.5 453.3"/>
 </g>
 <!-- marker -->
 <circle cx="229" cy="193" r="5.8" stroke="#0b800b" stroke-width="1.2"/>
 <path d="M229 193 L229 187.2 A5.8 5.8 0 0 0 223.2 193 Z M229 193 L229 198.8 A5.8 5.8 0 0 0 234.8 193 Z" fill="#0b800b" stroke="none"/>
 <path d="M219 193 L236 193 M229 183 L229 202.5" stroke="#0b800b" stroke-width="1"/><path d="M236 193.5 L264 193.5" stroke="#0b800b" stroke-width="1.2" stroke-dasharray="3 2"/>
 <rect x="230.5" y="163.5" width="89" height="28" fill="#fff" stroke="#0b800b" stroke-width="1.3"/>
</g>
<g fill="#0b800b" font-family="Liberation Sans" >
 <text x="232" y="173.3" font-size="8.8" font-weight="normal" stroke="#0b800b" stroke-width="0.35" textLength="85" lengthAdjust="spacingAndGlyphs">X: 5.50 m, Y: 13.33 m</text>
 <text x="232" y="181.5" font-size="8.8" font-weight="normal" stroke="#0b800b" stroke-width="0.35" textLength="83" lengthAdjust="spacingAndGlyphs">Cota superior: 6.00 m</text>
 <text x="232" y="189.7" font-size="8.8" font-weight="normal" stroke="#0b800b" stroke-width="0.35" textLength="80" lengthAdjust="spacingAndGlyphs">Cota inferior: 0.00 m</text>
 <text font-size="10" text-anchor="middle" transform="translate(33 204.5) rotate(24.5)">15.88</text>
 <text font-size="10" text-anchor="middle" transform="translate(8.5 351) rotate(-64)">23.23</text>
 <text font-size="10" text-anchor="middle" transform="translate(33 463) rotate(-12)">14.29</text>
 <text font-size="10.5" text-anchor="middle" x="166.5" y="242.5">11</text>
 <text font-size="10.5" text-anchor="middle" transform="translate(103.5 340.5) rotate(-90)">16</text>
 <text font-size="9.8" text-anchor="middle" transform="translate(300 203) rotate(-15)">14.91</text>
</g>
</svg>
<!-- scrollbar -->
<div class="a" style="left:0;top:627px;width:943px;height:16px;background:linear-gradient(#f0efe8,#f7f6f2 50%,#efeee7)"></div>
<div class="a" style="left:2px;top:628px;width:14px;height:14px;border:1px solid #b4c8ec;border-radius:2px;background:linear-gradient(135deg,#c8d8f4,#a4bce6)"></div>
<svg class="a" style="left:2px;top:628px" width="14" height="14"><path d="M8.5 3.5 L5 7 L8.5 10.5" fill="none" stroke="#1c2e6c" stroke-width="2"/></svg>
<div class="a" style="left:87px;top:628px;width:838px;height:13px;border:1px solid #86a8dc;border-radius:2px;background:linear-gradient(#a4c0e8 0,#a4c0e8 1px,#92b2de 2px,#98b6e0 8px,#8cacd8)"></div>
<div class="a" style="left:928px;top:628px;width:14px;height:14px;border:1px solid #b4c8ec;border-radius:2px;background:linear-gradient(135deg,#c8d8f4,#a4bce6)"></div>
<svg class="a" style="left:928px;top:628px" width="14" height="14"><path d="M5.5 3.5 L9 7 L5.5 10.5" fill="none" stroke="#1c2e6c" stroke-width="2"/></svg>
<!-- tabs -->
<div class="a" style="left:0;top:643px;width:943px;height:14px;background:#c1c0c9;border-top:1px solid #000;border-bottom:1px solid #9c9a8c;box-shadow:inset 0 1px 0 #e8e8f0"></div>
<svg class="a" style="left:0;top:643px" width="200" height="15" viewBox="0 643 200 15">
 <path d="M48 643.5 L114 643.5 L104 655.5 L59 655.5 Z" fill="#c9c9d1" stroke="#000" stroke-width="1"/>
 <path d="M105 643.5 L173 643.5 L163 655.5 L115 655.5 Z" fill="#c9c9d1" stroke="#000" stroke-width="1"/>
 <path d="M1 643 L57 643 L49 655.5 L12 655.5 Z" fill="#fff"/>
 <path d="M1 643.5 L12 655.5 L49 655.5 L57 643.5" fill="none" stroke="#000" stroke-width="1.1"/>
</svg>
<div class="a" style="left:15px;top:644px;color:#000;letter-spacing:-0.3px;-webkit-text-stroke:0.3px #000">Edição</div>
<div class="a" style="left:61px;top:644px;color:#000;letter-spacing:-0.45px;-webkit-text-stroke:0.3px #000">Esforços</div>
<div class="a" style="left:118px;top:644px;color:#000;letter-spacing:-0.45px;-webkit-text-stroke:0.3px #000">Armadura</div>
<!-- status bar -->
<div class="a" style="left:0;top:657px;width:943px;height:19px;background:#ece9d8;border-top:1px solid #fff"></div>
<div class="a" style="left:1px;top:658px;width:822px;height:17px;border:1px solid;border-color:#aca899 #fff #fff #aca899"></div>
<div class="a" style="left:825px;top:658px;width:117px;height:17px;border:1px solid;border-color:#aca899 #fff #fff #aca899"></div>
<div class="a" style="left:5px;top:660px;color:#000;letter-spacing:-0.4px;-webkit-text-stroke:0.3px #000">Editar</div>
<div class="a" style="left:0;top:675px;width:943px;height:5px;background:linear-gradient(#2e6fc2,#1f5fb5)"></div>
<div id="dlg" class="a">
 <div id="dlgt" class="a"></div>
 <div id="client" class="a"></div>
</div>
<!-- dialog title -->
<svg class="a" style="left:266px;top:280px" width="18" height="18" viewBox="0 0 18 18">
 <path d="M2 4 L5 1 L14 1 L14 4 Z" fill="#e8e8e8" stroke="#000" stroke-width="1"/>
 <path d="M2 4 L2 13 L5 16 L5 5 Z" fill="#bbb" stroke="#000" stroke-width="1"/>
 <rect x="5.5" y="4.5" width="10" height="11" fill="#000" stroke="#fff" stroke-width="1"/>
 <rect x="7.5" y="7" width="2" height="2" fill="#3ab0ff"/>
 <rect x="7.5" y="11" width="5" height="1" fill="#888"/>
</svg>
<div class="a" style="left:285px;top:283.5px;color:#fff;font-weight:bold;font-size:12px;line-height:14px;letter-spacing:-0.25px;white-space:nowrap;text-shadow:1px 1px 0 #0a1a50">Edição geometria módulo</div>
<div class="a" style="left:663px;top:280px;width:19px;height:19px;border:1px solid #fff;border-radius:3px;background:#0b3c8e"></div>
<svg class="a" style="left:663px;top:280px" width="19" height="19" viewBox="663 280 19 19">
 <path d="M668.5 283.5 Q665.5 288 667.5 293 L669 296" fill="none" stroke="#000" stroke-width="1.5"/>
 <path d="M668 284 Q666.5 288 668 292" fill="none" stroke="#fff" stroke-width="1"/>
 <path d="M670.5 285.5 L676 284.5 Q678.5 285.5 678.5 288.5 L678.5 293.5 L671 294.5 Z" fill="#fff" stroke="#000" stroke-width="1.2"/>
 <path d="M673.5 291 L673.5 288 L676 287.5 L676 291 Z" fill="none" stroke="#000" stroke-width="1"/>
 <path d="M670 296 L678 295" stroke="#30d0c0" stroke-width="1"/>
</svg>
<div class="a" style="left:684px;top:280px;width:20px;height:19px;border:1px solid #fff;border-radius:3px;background:radial-gradient(circle at 40% 40%,#e8735a,#d6401c 70%,#c73410)"></div>
<svg class="a" style="left:684px;top:280px" width="20" height="19" viewBox="0 0 20 19">
 <path d="M5.5 5 L14.5 14 M14.5 5 L5.5 14" stroke="#fff" stroke-width="1.8" stroke-linecap="butt"/>
</svg>

<!-- Espessuras group -->
<div class="grp" style="left:269px;top:309px;width:433px;height:65px"></div>
<div class="glbl" style="left:275px;top:302px">Espessuras</div>
<div class="lbl" style="left:286px;top:324px">Muro avenida esquerdo</div>
<div class="lbl" style="left:286px;top:348px">Laje superior</div>
<div class="inp" style="left:410px;top:321px"><span style="background:#1c44a8;color:#fff;-webkit-text-stroke-color:#fff;padding:1px 0 1px 1px">50</span></div>
<div class="inp" style="left:410px;top:345px">50</div>
<div class="lbl" style="left:470px;top:324px">cm</div>
<div class="lbl" style="left:470px;top:348px">cm</div>
<div class="lbl" style="left:503px;top:324px">Muro avenida direito</div>
<div class="lbl" style="left:503px;top:348px">Laje inferior</div>
<div class="inp" style="left:612px;top:321px">50</div>
<div class="inp" style="left:612px;top:345px">50</div>
<div class="lbl" style="left:672px;top:324px">cm</div>
<div class="lbl" style="left:672px;top:348px">cm</div>

<!-- Divisoes group -->
<div class="grp" style="left:269px;top:381px;width:433px;height:180px"></div>
<div class="glbl" style="left:275px;top:375px">Divisões</div>
<svg class="a" style="left:280px;top:394px" width="60" height="16" viewBox="0 0 60 16">
 <path d="M1.5 1.5 L8.5 1.5 L11.5 4.5 L11.5 13.5 L1.5 13.5 Z" fill="#fff" stroke="#000" stroke-width="1"/>
 <path d="M2 14.5 L12 14.5" stroke="#000" stroke-width="1"/>
 <path d="M6.5 5 L6.5 11 M3.5 8 L9.5 8" stroke="#00208a" stroke-width="2"/>
 <path d="M22 1.5 L33.5 1.5 L33.5 13.5 L22 13.5 Z" fill="#fff" stroke="#000" stroke-width="1"/>
 <path d="M22 14.5 L34 14.5" stroke="#000" stroke-width="1"/>
 <path d="M21.5 13.5 L33.5 1.5" stroke="#e00000" stroke-width="2.2"/>
 <path d="M41.5 0.5 L48 0.5 L48 12.5 L41.5 12.5 Z" fill="#f4f060" stroke="#000" stroke-width="1"/>
 <path d="M45.5 3.5 L53 3.5 L56 6.5 L56 14.5 L45.5 14.5 Z" fill="#fff" stroke="#000" stroke-width="1"/>
</svg>
<div class="a" style="left:276px;top:412px;width:419px;height:142px;background:#fff;border:1px solid #3c70c0"></div>
<div class="a" style="left:277px;top:413px;width:417px;height:19px;background:linear-gradient(#e8e8dc 0,#e4e3d7 14px,#d8d3c0 17px,#cdc6ae 19px)"></div>
<div class="a" style="left:404px;top:416px;width:2px;height:13px;border-left:1px solid #c8c4b0;border-right:1px solid #fff"></div>
<div class="a" style="left:511px;top:416px;width:2px;height:13px;border-left:1px solid #c8c4b0;border-right:1px solid #fff"></div>
<div class="a" style="left:604px;top:416px;width:2px;height:13px;border-left:1px solid #c8c4b0;border-right:1px solid #fff"></div>
<div class="lbl" style="left:286px;top:417px">Espessura muro divisor</div>
<div class="lbl" style="left:414px;top:417px">Medida do vão</div>
<div class="lbl" style="left:520px;top:417px">Vão livre inicial</div>
<div class="lbl" style="left:613px;top:417px">Vão livre final</div>
<!-- rows -->
<div class="a" style="left:278px;top:448px;width:414px;height:1px;background:#c8c0e0"></div>
<div class="a" style="left:278px;top:463px;width:414px;height:1px;background:#c8c0e0"></div>
<div class="a" style="left:278px;top:479px;width:414px;height:1px;background:#909090"></div>
<div class="a" style="left:278px;top:433px;width:127px;height:16px;background:#0a64b4"></div>
<div class="a" style="left:405px;top:432px;width:1px;height:48px;background:#b0b0b0"></div>
<div class="a" style="left:512px;top:432px;width:1px;height:48px;background:#c8c8d8"></div>
<div class="a" style="left:605px;top:432px;width:1px;height:48px;background:#c8c8d8"></div>
<div class="a" style="left:691px;top:432px;width:1px;height:48px;background:#c8c8d8"></div>
<div class="lbl" style="left:380px;top:433px;width:23px;text-align:right;color:#fff;-webkit-text-stroke-color:#fff">25</div>
<div class="lbl" style="left:409px;top:433px">Perpendicular à p...</div>
<div class="a" style="left:497px;top:433px;width:15px;height:16px;background:#dcdcdc;border-top:1px solid #f4f4f4;border-left:1px solid #808080;border-right:1px solid #000;border-bottom:1px solid #000;box-shadow:inset -1px -1px 0 #909090,inset 1px 1px 0 #fff"></div>
<svg class="a" style="left:501px;top:438px" width="8" height="5"><path d="M0 0 L8 0 L4 4.5 Z" fill="#000"/></svg>
<div class="lbl" style="left:570px;top:433px;width:32px;text-align:right">400</div>
<div class="lbl" style="left:657px;top:433px;width:32px;text-align:right">400</div>
<div class="lbl" style="left:380px;top:449px;width:23px;text-align:right;color:#000">25</div>
<div class="lbl" style="left:409px;top:449px">Perpendicular à p...</div>
<div class="a" style="left:497px;top:449px;width:15px;height:16px;background:#dcdcdc;border-top:1px solid #f4f4f4;border-left:1px solid #808080;border-right:1px solid #000;border-bottom:1px solid #000;box-shadow:inset -1px -1px 0 #909090,inset 1px 1px 0 #fff"></div>
<svg class="a" style="left:501px;top:454px" width="8" height="5"><path d="M0 0 L8 0 L4 4.5 Z" fill="#000"/></svg>
<div class="lbl" style="left:570px;top:449px;width:32px;text-align:right">400</div>
<div class="lbl" style="left:657px;top:449px;width:32px;text-align:right">400</div>
<div class="lbl" style="left:380px;top:465px;width:23px;text-align:right;color:#000">25</div>
<div class="lbl" style="left:409px;top:465px">Perpendicular à p...</div>
<div class="a" style="left:497px;top:465px;width:15px;height:16px;background:#dcdcdc;border-top:1px solid #f4f4f4;border-left:1px solid #808080;border-right:1px solid #000;border-bottom:1px solid #000;box-shadow:inset -1px -1px 0 #909090,inset 1px 1px 0 #fff"></div>
<svg class="a" style="left:501px;top:470px" width="8" height="5"><path d="M0 0 L8 0 L4 4.5 Z" fill="#000"/></svg>
<div class="lbl" style="left:570px;top:465px;width:32px;text-align:right">400</div>
<div class="lbl" style="left:657px;top:465px;width:32px;text-align:right">400</div>

<div class="a" style="left:268px;top:565px;width:435px;height:2px;border-top:1px solid #aca899;border-bottom:1px solid #fff"></div>
<div class="btn" style="left:269px;top:573px;width:53px;box-shadow:inset 0 1px 0 #b8e0f8,inset 1px 0 0 #a8d0f0,inset -1px 0 0 #a8d0f0,inset 0 -2px 0 #3a70d0;padding-top:2px">Aceitar</div>
<div class="btn" style="left:641px;top:573px;width:61px">Cancelar</div>
</body></html>
